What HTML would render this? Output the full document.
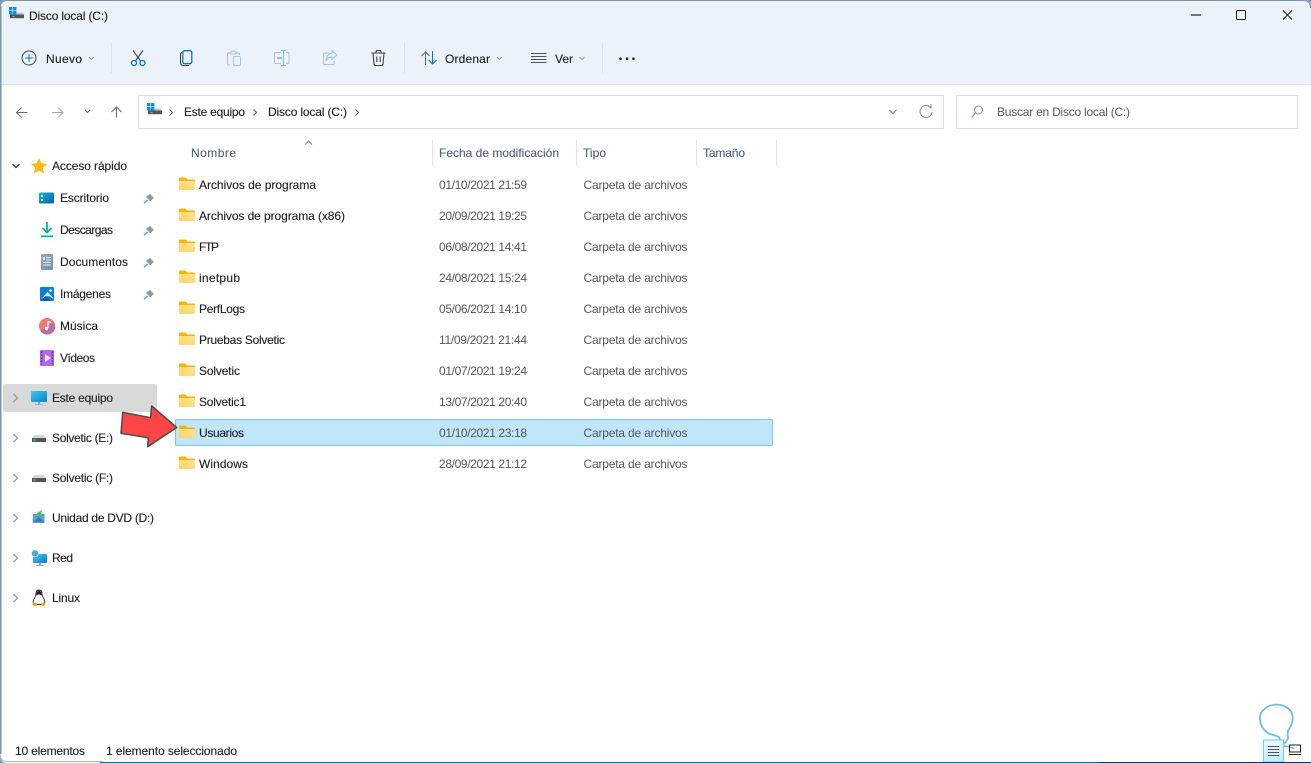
<!DOCTYPE html>
<html lang="es"><head><meta charset="utf-8"><title>Disco local (C:)</title>
<style>
html,body{margin:0;padding:0;width:1311px;height:763px;overflow:hidden;background:#fff}
svg{display:block}
text{font-family:"Liberation Sans",sans-serif;font-size:12px;fill:#1c1c1c;stroke:#1c1c1c;stroke-width:.12}
.h{fill:#4f607c;stroke:#4f607c}
.g{fill:#565656;stroke:none}
</style></head><body>
<svg width="1311" height="763" viewBox="0 0 1311 763" xmlns="http://www.w3.org/2000/svg">
<defs>
<linearGradient id="fg" x1="0" y1="1" x2="1" y2="0"><stop offset="0" stop-color="#fcd566"/><stop offset="1" stop-color="#ffe391"/></linearGradient>
<linearGradient id="btn" x1="0" y1="0" x2="0" y2="1"><stop offset="0" stop-color="#eaf8fe"/><stop offset="1" stop-color="#c8ecfb"/></linearGradient>
<linearGradient id="mon" x1="0" y1="0" x2="1" y2="1"><stop offset="0" stop-color="#38cdf0"/><stop offset="1" stop-color="#0a7fc9"/></linearGradient>
<linearGradient id="desk" x1="0" y1="0" x2="1" y2="1"><stop offset="0" stop-color="#1bb0e0"/><stop offset="1" stop-color="#0a5fa8"/></linearGradient>
<linearGradient id="doc" x1="0" y1="0" x2="1" y2="1"><stop offset="0" stop-color="#9aa8ba"/><stop offset="1" stop-color="#6f8db4"/></linearGradient>
<g id="folder"><path d="M0 1.500Q0 .5 1 .5H6.500L8.500 2.500H15Q16 2.500 16 3.500V6H0Z" fill="#f7b500"/><path d="M0 4H15.200Q16 4 16 4.800V12Q16 13 15 13H1Q0 13 0 12Z" fill="url(#fg)"/></g>
<g id="pin"><path d="M1-4.500L5-.5 3.500.5 1.500 3-3-1.500-.5-3.500Z" fill="#8b98a6"/><path d="M-1.500 1.500L-5 4.500" stroke="#8b98a6" stroke-width="1.500"/></g>
<path id="chev" d="M-2-4L2 0-2 4" fill="none" stroke="#9a9a9a" stroke-width="1.300"/>
<g id="crumb"><path d="M-2.500-3L.5 0-2.500 3" fill="none" stroke="#666" stroke-width="1.200"/></g>
<g id="logo"><path d="M3 5.500H13.500L15 8V11H1V8Z" fill="#c3c7cb"/><rect x="1" y="7.500" width="14" height="3.700" fill="#50555a"/><rect x="3.500" y="9" width="2" height="1" fill="#3fe05c"/><rect x="0" y="0" width="3.400" height="3.400" fill="#0a93e6"/><rect x="4" y="0" width="3.400" height="3.400" fill="#0a93e6"/><rect x="0" y="4" width="3.400" height="3.400" fill="#0a93e6"/><rect x="4" y="4" width="3.400" height="3.400" fill="#0a93e6"/></g>
<g id="hdd"><path d="M2.500 0H11.500L14 3V7H0V3Z" fill="#d4d6d9"/><rect x="0" y="3" width="14" height="4" fill="#53575c"/><rect x="1.500" y="4.500" width="2" height="1" fill="#70d080"/></g>
</defs>

<rect width="1311" height="763" fill="#fff"/>
<rect width="1311" height="84" fill="#ebf2f9"/>
<rect y="84" width="1311" height="1" fill="#e1e5e9"/>

<!-- title -->
<use href="#logo" x="9" y="7"/>
<text x="29" y="20" textLength="79">Disco local (C:)</text>
<path d="M1191 15H1201" stroke="#222" stroke-width="1.200"/>
<rect x="1236.500" y="10.500" width="9" height="9" rx="1" fill="none" stroke="#222"/>
<path d="M1283 10.500L1292 19.500M1292 10.500L1283 19.500" stroke="#222"/>

<!-- toolbar -->
<circle cx="29" cy="58" r="7" fill="none" stroke="#444" stroke-width="1"/>
<path d="M29 54V62M25 58H33" stroke="#0078d4"/>
<text x="46" y="63" textLength="36">Nuevo</text>
<path d="M89 57L91.500 59.500 94 57" fill="none" stroke="#9a9a9a"/>
<rect x="111" y="43" width="1" height="30" fill="#dfe3e7"/>
<path d="M133 50.500L141 61.500M143 50.500L135 61.500" stroke="#444" stroke-width="1.100"/>
<circle cx="134" cy="63" r="2.500" fill="none" stroke="#0078d4" stroke-width="1.300"/>
<circle cx="142.500" cy="63" r="2.500" fill="none" stroke="#0078d4" stroke-width="1.300"/>
<path d="M182 52.500Q180.500 53 180.500 55V62.500Q180.500 65.500 183.500 65.500H189" fill="none" stroke="#444" stroke-width="1.100"/>
<rect x="182.800" y="50.700" width="9" height="13" rx="1.800" fill="#ebf2f9" stroke="#0078d4" stroke-width="1.300"/>
<path d="M236 53H238.500Q239.500 53 239.500 54V55M230 65H228.500Q227.500 65 227.500 64V54Q227.500 53 228.500 53H231M231 52.500Q231 51 233.500 51T236 52.500V54H231Z" fill="none" stroke="#b7bcc0"/>
<rect x="233.500" y="56.500" width="7" height="9" rx="1" fill="none" stroke="#9ccbec"/>
<path d="M281 52.500H275.500Q274.500 52.500 274.500 53.500V62.500Q274.500 63.500 275.500 63.500H281M286 52.500H288Q289 52.500 289 53.500V62.500Q289 63.500 288 63.500H286" fill="none" stroke="#b7bcc0"/>
<path d="M281 50.500H286M283.500 50.500V65.500M281 65.500H286" fill="none" stroke="#7cbbe6"/>
<rect x="277" y="57" width="5" height="1.800" fill="#7cbbe6"/>
<path d="M329 53H324.500Q323.500 53 323.500 54V63.500Q323.500 64.500 324.500 64.500H333Q334 64.500 334 63.500V61" fill="none" stroke="#b7bcc0"/>
<path d="M332 50.500L337 55 332 59.500V57Q328 56.800 326 61Q326.500 54 332 53.200Z" fill="#ebf2f9" stroke="#8cc4ea"/>
<path d="M371.500 53H385.500M375.500 53L376.500 50.500H380.500L381.500 53M373 53L374 64Q374.200 65.500 375.500 65.500H381.500Q382.800 65.500 383 64L384 53" fill="none" stroke="#444" stroke-width="1.100"/>
<path d="M376.800 56.500V62M380.200 56.500V62" stroke="#444" stroke-width="1.100"/>
<rect x="404" y="43" width="1" height="30" fill="#dfe3e7"/>
<path d="M425.500 65V52M421.500 56L425.500 52 429.500 56" fill="none" stroke="#666"/>
<path d="M432.500 51V64M428.800 60L432.500 64 436.500 60" fill="none" stroke="#0078d4"/>
<text x="445" y="63" textLength="45">Ordenar</text>
<path d="M497 57L499.500 59.500 502 57" fill="none" stroke="#9a9a9a"/>
<path d="M531 53.500H546.500M531 56.500H546.500M531 59.500H546.500M531 62.500H546.500" stroke="#555"/>
<text x="555" y="63" textLength="18">Ver</text>
<path d="M579.500 57L582 59.500 584.500 57" fill="none" stroke="#9a9a9a"/>
<rect x="602" y="43" width="1" height="30" fill="#dfe3e7"/>
<circle cx="620.500" cy="58.700" r="1.300" fill="#222"/><circle cx="627" cy="58.700" r="1.300" fill="#222"/><circle cx="633.500" cy="58.700" r="1.300" fill="#222"/>

<!-- nav -->
<path d="M27.500 112.500H17M21.500 107.500L16.500 112.500 21.500 117.500" fill="none" stroke="#6a6a6a"/>
<path d="M52 112.500H62.500M58 107.500L63 112.500 58 117.500" fill="none" stroke="#ababab"/>
<path d="M85 110L87.500 112.500 90 110" fill="none" stroke="#666"/>
<path d="M116.500 117.500V107M111.500 112L116.500 107 121.500 112" fill="none" stroke="#6a6a6a"/>
<rect x="138.500" y="95.500" width="805" height="33" fill="#fff" stroke="#dcdcdc"/>
<use href="#logo" x="147" y="103"/>
<use href="#crumb" x="172" y="112.500"/>
<text x="184" y="116" textLength="61">Este equipo</text>
<use href="#crumb" x="256" y="112.500"/>
<text x="268" y="116" textLength="79">Disco local (C:)</text>
<use href="#crumb" x="358" y="112.500"/>
<path d="M889.500 110L893 113.500 896.500 110" fill="none" stroke="#777"/>
<path d="M930.500 107.500A6 6 0 1 0 932 112" fill="none" stroke="#888"/>
<path d="M928 105.500L931 108 931 104" fill="none" stroke="#888"/>
<rect x="956.500" y="95.500" width="341" height="33" fill="#fff" stroke="#dcdcdc"/>
<circle cx="978.500" cy="110" r="4" fill="none" stroke="#8a8a8a"/>
<path d="M975.500 113L971.500 117.500" stroke="#c78d66" stroke-width="1.200"/>
<text class="g" x="997" y="116" textLength="133">Buscar en Disco local (C:)</text>

<!-- columns -->
<path d="M305 144.500L308.500 141 312 144.500" fill="none" stroke="#888"/>
<text class="h" x="191" y="157" textLength="45">Nombre</text>
<rect x="432" y="140" width="1" height="25" fill="#e3e3e3"/>
<text class="h" x="439" y="157" textLength="120">Fecha de modificación</text>
<rect x="576" y="140" width="1" height="25" fill="#e3e3e3"/>
<text class="h" x="583" y="157" textLength="23">Tipo</text>
<rect x="696" y="140" width="1" height="25" fill="#e3e3e3"/>
<text class="h" x="703" y="157" textLength="42">Tamaño</text>
<rect x="776" y="140" width="1" height="25" fill="#e3e3e3"/>

<!-- selection -->
<rect x="175.500" y="419.500" width="597" height="26" rx="1" fill="#c0e6fc" stroke="#83c4ec"/>

<!-- rows -->
<use href="#folder" x="179" y="177"/><text x="199" y="189" textLength="117">Archivos de programa</text><text class="g" x="439" y="189" textLength="88">01/10/2021 21:59</text><text class="g" x="583.500" y="189" textLength="104">Carpeta de archivos</text>
<use href="#folder" x="179" y="208"/><text x="199" y="220" textLength="146">Archivos de programa (x86)</text><text class="g" x="439" y="220" textLength="88">20/09/2021 19:25</text><text class="g" x="583.500" y="220" textLength="104">Carpeta de archivos</text>
<use href="#folder" x="179" y="239"/><text x="199" y="251" textLength="20">FTP</text><text class="g" x="439" y="251" textLength="88">06/08/2021 14:41</text><text class="g" x="583.500" y="251" textLength="104">Carpeta de archivos</text>
<use href="#folder" x="179" y="270"/><text x="199" y="282" textLength="41">inetpub</text><text class="g" x="439" y="282" textLength="88">24/08/2021 15:24</text><text class="g" x="583.500" y="282" textLength="104">Carpeta de archivos</text>
<use href="#folder" x="179" y="301"/><text x="199" y="313" textLength="46">PerfLogs</text><text class="g" x="439" y="313" textLength="88">05/06/2021 14:10</text><text class="g" x="583.500" y="313" textLength="104">Carpeta de archivos</text>
<use href="#folder" x="179" y="332"/><text x="199" y="344" textLength="86">Pruebas Solvetic</text><text class="g" x="439" y="344" textLength="88">11/09/2021 21:44</text><text class="g" x="583.500" y="344" textLength="104">Carpeta de archivos</text>
<use href="#folder" x="179" y="363"/><text x="199" y="375" textLength="41">Solvetic</text><text class="g" x="439" y="375" textLength="88">01/07/2021 19:24</text><text class="g" x="583.500" y="375" textLength="104">Carpeta de archivos</text>
<use href="#folder" x="179" y="394"/><text x="199" y="406" textLength="47">Solvetic1</text><text class="g" x="439" y="406" textLength="88">13/07/2021 20:40</text><text class="g" x="583.500" y="406" textLength="104">Carpeta de archivos</text>
<use href="#folder" x="179" y="425"/><text x="199" y="437" textLength="45">Usuarios</text><text class="g" x="439" y="437" textLength="88">01/10/2021 23:18</text><text class="g" x="583.500" y="437" textLength="104">Carpeta de archivos</text>
<use href="#folder" x="179" y="456"/><text x="199" y="468" textLength="49">Windows</text><text class="g" x="439" y="468" textLength="88">28/09/2021 21:12</text><text class="g" x="583.500" y="468" textLength="104">Carpeta de archivos</text>

<!-- sidebar -->
<rect x="3" y="384" width="154" height="28" rx="2" fill="#d9d9d9"/>
<path d="M12.500 164L16 167.500 19.500 164" fill="none" stroke="#333" stroke-width="1.300"/>
<path d="M39 158L41.400 163.300 47 164 42.800 167.800 44 173.500 39 170.600 34 173.500 35.200 167.800 31 164 36.600 163.300Z" fill="#fdb90f"/>
<text x="52" y="170" textLength="75">Acceso rápido</text>

<rect x="39" y="192.500" width="15" height="11" rx="1" fill="url(#desk)"/><rect x="41" y="195" width="2" height="2" fill="#d5f2fb"/><rect x="41" y="199" width="2" height="2" fill="#d5f2fb"/>
<text x="60" y="202" textLength="49">Escritorio</text><use href="#pin" x="149" y="198.500"/>
<path d="M47 222V232M42.500 228L47 232.500 51.500 228" fill="none" stroke="#00b08c" stroke-width="1.700"/><rect x="41" y="235.500" width="12" height="1.700" fill="#00b08c"/>
<text x="60" y="234" textLength="53">Descargas</text><use href="#pin" x="149" y="230.500"/>
<rect x="41" y="254" width="12" height="16" rx="1" fill="url(#doc)"/><path d="M46 257.500H51M46 260H51M43 262.500H51M43 265H51" stroke="#e8edf3"/><rect x="43" y="257" width="2" height="3" fill="#dde4ec"/>
<text x="60" y="266" textLength="68">Documentos</text><use href="#pin" x="149" y="262.500"/>
<rect x="40" y="287" width="14" height="14" rx="1" fill="#0f7fd3"/><path d="M41 299.500L47.500 292 53 297.500V298.500L50 296.500 47.500 296Z" fill="#d8effc"/><path d="M40 300L46 296 51 301H41Z" fill="#0a5ea8"/><circle cx="50.500" cy="290.500" r="1.300" fill="#fff"/>
<text x="60" y="298" textLength="51">Imágenes</text><use href="#pin" x="149" y="294.500"/>
<circle cx="47" cy="326" r="8" fill="#ee7b6e"/><path d="M40.500 331L54 322A8 8 0 0 1 40.500 331Z" fill="#b56ea6"/><path d="M48 321.500V328" stroke="#fff" stroke-width="1.200"/><circle cx="46.500" cy="328.500" r="1.700" fill="#fff"/><path d="M48 321.500L51 322.500" stroke="#fff"/>
<text x="60" y="330" textLength="38">Música</text>
<rect x="40" y="350" width="14" height="16" rx="1" fill="#b06ae8"/><path d="M45 354L51 358 45 362Z" fill="#f2e4fb"/><path d="M41.500 351.500V364.500M52.500 351.500V364.500" stroke="#5a2a8c" stroke-width="1.500" stroke-dasharray="1.500 1.500"/>
<text x="60" y="362" textLength="35">Vídeos</text>

<use href="#chev" x="15.500" y="398"/>
<rect x="31" y="391" width="16" height="11" rx="1" fill="url(#mon)"/><path d="M38 402H40V404H38Z" fill="#8aa0b0"/><rect x="35" y="404" width="8" height="1" fill="#9fb0bc"/>
<text x="52" y="402" textLength="61">Este equipo</text>
<use href="#chev" x="15.500" y="438"/><use href="#hdd" x="32" y="435"/>
<text x="52" y="442" textLength="61">Solvetic (E:)</text>
<use href="#chev" x="15.500" y="478"/><use href="#hdd" x="32" y="475"/>
<text x="52" y="482" textLength="61">Solvetic (F:)</text>
<use href="#chev" x="15.500" y="518"/>
<path d="M33 514H44.500V523H32.500Z" fill="#5fa0d0"/><path d="M33 522L38.500 517 44.500 522Z" fill="#3c7cb4"/><path d="M42 510L37 513 40 518.500Z" fill="#35c45a"/>
<text x="52" y="522" textLength="102">Unidad de DVD (D:)</text>
<use href="#chev" x="15.500" y="558"/>
<rect x="33" y="554" width="14" height="9" rx="1" fill="url(#mon)"/><circle cx="35" cy="553.500" r="3.500" fill="#4aa8e2" stroke="#e8f6fd" stroke-width=".6"/><rect x="39" y="563" width="2" height="2" fill="#8aa0b0"/><rect x="36" y="565" width="8" height="1" fill="#9fb0bc"/>
<text x="52" y="562" textLength="21">Red</text>
<use href="#chev" x="15.500" y="598"/>
<path d="M39 590Q42 590 42 593.500Q42 596 44 599Q45.500 602 44 604.500H34Q32.500 602 34 599Q36 596 36 593.500Q36 590 39 590Z" fill="#fff" stroke="#333" stroke-width=".9"/><path d="M36.300 595.500Q36 591 39 590.500Q42 591 41.700 595.500Q39 593.500 36.300 595.500Z" fill="#222"/><path d="M37.800 594.200L39 595.500 40.300 594.200Z" fill="#f3a81d"/><path d="M32.500 603.500L36.500 602.500 37 605.500 33.500 606.500ZM45.500 603.500L41.500 602.500 41 605.500 44.500 606.500Z" fill="#f3a81d"/>
<text x="52" y="602" textLength="28">Linux</text>

<!-- arrow -->
<path d="M122.700 412.300L150.500 417.700 151.700 406 176.700 427.500 147.700 446.700 148.300 437.700 121 433.300Z" fill="#fe4646" stroke="#4c4c4c" stroke-width="1.500" stroke-linejoin="round"/>

<!-- status -->
<text x="15" y="755" textLength="70">10 elementos</text>
<text x="106" y="755" textLength="131">1 elemento seleccionado</text>

<!-- watermark -->
<path d="M1283 746L1279 737Q1274 735 1269 733.700Q1261 729 1260 720Q1259 711 1269 706Q1277 703 1284 706Q1292.500 710 1292.700 717Q1293 724 1288.300 730Q1287 735 1288.300 738Q1285 744 1281 746M1282 746Q1290 746 1294 749" fill="none" stroke="#70bce8" stroke-width="1.800"/>
<rect x="1263.500" y="740" width="20" height="22" fill="url(#btn)" stroke="#5ed2f6"/>
<path d="M1268 746.500H1279M1268 749.500H1279M1268 752.500H1279M1268 755.500H1279" stroke="#555"/>
<path d="M1289.500 752V745H1300.500V752M1289 752H1301" fill="none" stroke="#222"/><rect x="1289" y="754" width="12" height="1" fill="#222"/>

<!-- window frame -->
<path d="M0 8Q0 .5 8 .5H1303Q1310.500 .5 1310.500 8" fill="none" stroke="#7b94a8"/>
<path d="M0 0H7Q0 0 0 7ZM1311 0H1304Q1311 0 1311 7Z" fill="#7b94a8"/>
<rect x="0" y="6" width="1.500" height="748" fill="#7b94a8"/>
<path d="M0 754Q0 761.500 7 761.500H102" fill="none" stroke="#a5b3be"/>
<path d="M0 755V763H7Q0 763 0 755Z" fill="#8096a8"/>
<rect x="100" y="762" width="1000" height="1" fill="#136b9c"/>
<rect x="1100" y="762" width="211" height="1" fill="#1b2a66"/>
</svg>
</body></html>
